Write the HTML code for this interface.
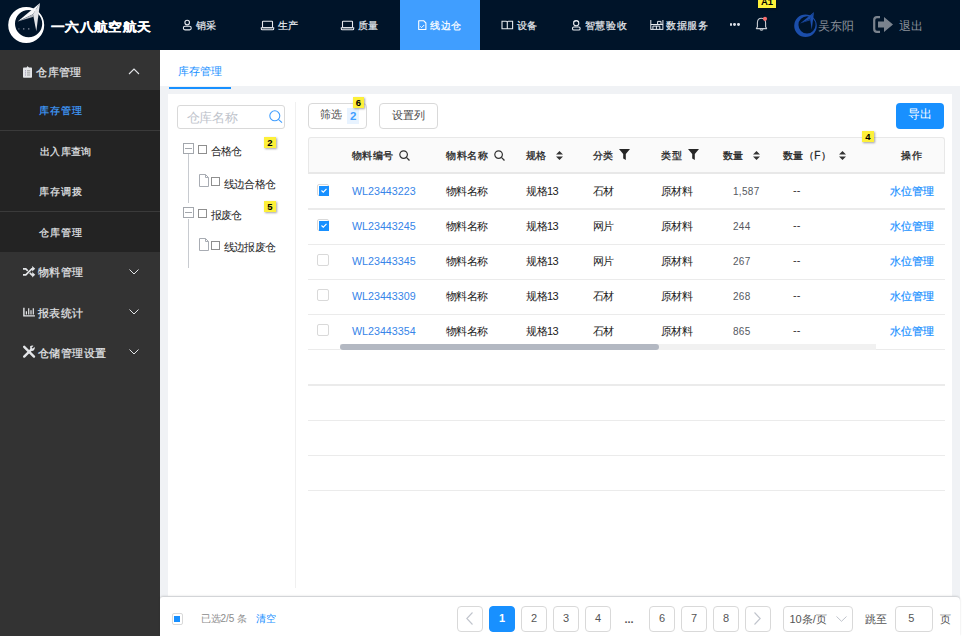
<!DOCTYPE html><html><head><meta charset="utf-8"><style>
*{margin:0;padding:0;box-sizing:border-box}
html,body{width:962px;height:636px;overflow:hidden;background:#fff;font-family:"Liberation Sans",sans-serif;font-size:12px;color:#303133}
.a{position:absolute;white-space:nowrap}
.r{position:absolute}
.yb{position:absolute;background:#fdf03a;color:#000;font-weight:bold;font-size:9.5px;line-height:12px;text-align:center;box-shadow:1px 1px 2px rgba(0,0,0,.35)}
.cb{position:absolute;width:12px;height:12px;border:1px solid #d9d9d9;border-radius:2px;background:#fff}
.pg{position:absolute;top:606px;width:26px;height:26px;border:1px solid #d9d9d9;border-radius:4px;text-align:center;line-height:23px;color:#555;font-size:11px;background:#fff}
svg{position:absolute;overflow:visible}
</style></head><body>
<div class="r" style="left:0;top:0;width:960px;height:50px;background:#001429"></div>
<svg style="left:0;top:0" width="50" height="50" viewBox="0 0 50 50">
<path fill-rule="evenodd" fill="#fff" d="M8.2 25 A18 18 0 1 0 44.2 25 A18 18 0 1 0 8.2 25 Z M15 23.7 A13.6 13.6 0 1 1 42.2 23.7 A13.6 13.6 0 1 1 15 23.7 Z"/>
<path d="M40 3 L17.7 21.6 L33 14.3 Z" fill="#f6f7f9"/>
<path d="M40 3 L33 14.3 L36.3 31.3 Z" fill="#e2e4e8"/>
<path d="M33 14.3 L17.7 21.6 L33.6 16.8 Z" fill="#aeb3bb"/>
<rect x="18.5" y="28.3" width="0.8" height="1.2" fill="#8a90a0"/><rect x="23" y="28.3" width="1.4" height="1.2" fill="#8a90a0"/><rect x="28" y="28.3" width="1.4" height="1.2" fill="#8a90a0"/>
</svg>
<div class="a" style="left:51px;top:16.5px;font-size:14px;line-height:20px;color:#fff;font-weight:bold;letter-spacing:0.35px;transform:scaleY(0.88);transform-origin:0 9.5px;-webkit-text-stroke:0.3px #fff">一六八航空航天</div>
<div class="r" style="left:400px;top:0;width:80px;height:50px;background:#409eff"></div>
<svg style="left:0;top:0" width="962" height="50"><circle cx="187.2" cy="22.6" r="2.3" fill="none" stroke="#e6e9ee" stroke-width="1.1"/><rect x="183.4" y="26.3" width="7.8" height="3.6" rx="1.6" fill="none" stroke="#e6e9ee" stroke-width="1.1"/></svg>
<div class="a" style="left:195.5px;top:16.0px;font-size:10px;line-height:20px;color:#e6e9ee;font-weight:normal;letter-spacing:0.7px;-webkit-text-stroke:0.2px #e6e9ee">销采</div>
<svg style="left:261px;top:0" width="14" height="50"><rect x="1.5" y="21.2" width="10" height="6.5" rx="0.6" fill="none" stroke="#e6e9ee" stroke-width="1.1"/><path d="M0.3 27.8 H12.7 V28.8 Q12.7 29.8 11.7 29.8 H1.3 Q0.3 29.8 0.3 28.8 Z" fill="none" stroke="#e6e9ee" stroke-width="1.1"/></svg>
<div class="a" style="left:277.5px;top:16.0px;font-size:10px;line-height:20px;color:#e6e9ee;font-weight:normal;letter-spacing:0.7px;-webkit-text-stroke:0.2px #e6e9ee">生产</div>
<svg style="left:341px;top:0" width="14" height="50"><rect x="1.5" y="21.2" width="10" height="6.5" rx="0.6" fill="none" stroke="#e6e9ee" stroke-width="1.1"/><path d="M0.3 27.8 H12.7 V28.8 Q12.7 29.8 11.7 29.8 H1.3 Q0.3 29.8 0.3 28.8 Z" fill="none" stroke="#e6e9ee" stroke-width="1.1"/></svg>
<div class="a" style="left:357.5px;top:16.0px;font-size:10px;line-height:20px;color:#e6e9ee;font-weight:normal;letter-spacing:0.7px;-webkit-text-stroke:0.2px #e6e9ee">质量</div>
<svg style="left:418px;top:0" width="10" height="50"><path d="M0.7 20.7 H5.6 L7.9 23 V29.5 H0.7 Z" fill="none" stroke="#fff" stroke-width="1.1" stroke-linejoin="round"/><path d="M2.3 26.4 L3.6 27.6 L6.2 25" fill="none" stroke="#fff" stroke-width="1"/></svg>
<div class="a" style="left:430px;top:16.0px;font-size:10px;line-height:20px;color:#fff;font-weight:normal;letter-spacing:0.7px;-webkit-text-stroke:0.2px #fff">线边仓</div>
<svg style="left:500.5px;top:0" width="14" height="50"><path d="M1 21.3 H5.3 Q6.3 21.3 6.3 22.3 V28.8 H1 Z M11.6 21.3 H7.3 Q6.3 21.3 6.3 22.3 V28.8 H11.6 Z" fill="none" stroke="#e6e9ee" stroke-width="1.1"/></svg>
<div class="a" style="left:516.5px;top:16.0px;font-size:10px;line-height:20px;color:#e6e9ee;font-weight:normal;letter-spacing:0.7px;-webkit-text-stroke:0.2px #e6e9ee">设备</div>
<svg style="left:572px;top:0" width="11" height="50"><circle cx="4.2" cy="23.2" r="2.6" fill="none" stroke="#e6e9ee" stroke-width="1.1"/><path d="M1.5 21.8 Q4.2 19.5 6.9 21.8" fill="none" stroke="#e6e9ee" stroke-width="1"/><rect x="0.5" y="27" width="7.6" height="3" rx="1.3" fill="none" stroke="#e6e9ee" stroke-width="1.1"/></svg>
<div class="a" style="left:584.5px;top:16.0px;font-size:10px;line-height:20px;color:#e6e9ee;font-weight:normal;letter-spacing:0.7px;-webkit-text-stroke:0.2px #e6e9ee">智慧验收</div>
<svg style="left:649.5px;top:0" width="14" height="50"><path d="M0.8 20 V29.8 M12.9 20 V29.8 M0.8 24.5 H12.9 M0.8 29.4 H12.9 M7.6 24.5 V21.4 H11 V24.5 M2.9 29.4 V26.1 H9.8 V29.4 M6.4 26.1 V29.4" fill="none" stroke="#e6e9ee" stroke-width="1"/></svg>
<div class="a" style="left:666px;top:16.0px;font-size:10px;line-height:20px;color:#e6e9ee;font-weight:normal;letter-spacing:0.7px;-webkit-text-stroke:0.2px #e6e9ee">数据服务</div>
<div class="r" style="left:729.6px;top:23.2px;width:2.8px;height:2.8px;border-radius:50%;background:#d8dde5"></div>
<div class="r" style="left:733.4px;top:23.2px;width:2.8px;height:2.8px;border-radius:50%;background:#d8dde5"></div>
<div class="r" style="left:737.2px;top:23.2px;width:2.8px;height:2.8px;border-radius:50%;background:#d8dde5"></div>
<svg style="left:0;top:0" width="962" height="50"><path d="M756.4 28.6 H766.6 L765.6 26.8 V23 Q765.6 18.3 761.5 18.3 Q757.4 18.3 757.4 23 V26.8 Z" fill="none" stroke="#c9cdd3" stroke-width="1.1" stroke-linejoin="round"/><path d="M759.9 29.3 Q761.5 31 763.1 29.3" fill="none" stroke="#c9cdd3" stroke-width="1.1"/><circle cx="765" cy="18.8" r="2.1" fill="#f56c6c"/></svg>
<div class="yb" style="left:758px;top:0px;width:18px;height:8px;line-height:8px;font-size:9.5px;overflow:hidden"><span style="position:relative;top:-2px">A1</span></div>
<svg style="left:0;top:0" width="962" height="50"><g transform="translate(789.05 10) scale(0.628)">
<path fill-rule="evenodd" fill="#1b4eab" d="M8.2 25 A18 18 0 1 0 44.2 25 A18 18 0 1 0 8.2 25 Z M15 23.7 A13.6 13.6 0 1 1 42.2 23.7 A13.6 13.6 0 1 1 15 23.7 Z"/>
<path d="M39.8 3.2 L17.7 21.6 L33.5 14.5 Z" fill="#1b4eab"/>
<path d="M39.8 3.2 L33.5 14.5 L36.1 31.1 Z" fill="#1b4eab"/>
<path d="M33.5 14.5 L17.7 21.6 L34 16.5 Z" fill="#15408f"/>
</g></svg>
<div class="a" style="left:818px;top:15.5px;font-size:11.5px;line-height:20px;color:#8c929b;font-weight:normal;">吴东阳</div>
<svg style="left:873px;top:16px" width="21" height="17" viewBox="0 0 21 17">
<path d="M7 1.2 H4 Q1.2 1.2 1.2 4 V13 Q1.2 15.8 4 15.8 H7" fill="none" stroke="#7a838e" stroke-width="2.2"/>
<path d="M5 5.5 H11 V1 L20 8.5 L11 16 V11.5 H5 Z" fill="#7a838e"/>
</svg>
<div class="a" style="left:899px;top:15.5px;font-size:11.5px;line-height:20px;color:#8c929b;font-weight:normal;">退出</div>
<div class="r" style="left:0;top:50px;width:160px;height:586px;background:#333"></div>
<div class="r" style="left:0;top:90px;width:160px;height:162px;background:#232323"></div>
<div class="r" style="left:0;top:130px;width:160px;height:1px;background:#3a3a3a"></div>
<div class="r" style="left:0;top:211px;width:160px;height:1px;background:#3a3a3a"></div>
<svg style="left:0;top:0" width="160" height="400"><rect x="23" y="67.6" width="9" height="10.2" rx="0.8" fill="#e4e6e9"/><path d="M26.3 68.2 L27.5 66 L29.3 68.2 Z" fill="#e4e6e9"/><path d="M25 70.8 h1 M25 72.9 h1 M25 75 h1" stroke="#9a8fb0" stroke-width="1"/><path d="M27 70.8 h3.2 M27 72.9 h3.2 M27 75 h3.2" stroke="#9a9a9a" stroke-width="1"/></svg>
<div class="a" style="left:36.3px;top:61.7px;font-size:11px;line-height:20px;color:#e4e6e9;font-weight:normal;letter-spacing:0.4px;-webkit-text-stroke:0.2px #e4e6e9">仓库管理</div>
<svg style="left:128px;top:68px" width="12" height="7" viewBox="0 0 12 7"><path d="M1 6 L6 1 L11 6" fill="none" stroke="#e4e6e9" stroke-width="1.1"/></svg>
<div class="a" style="left:39.2px;top:101.0px;font-size:10px;line-height:20px;color:#409eff;font-weight:normal;letter-spacing:0.8px;-webkit-text-stroke:0.2px #409eff">库存管理</div>
<div class="a" style="left:39.8px;top:142.0px;font-size:10px;line-height:20px;color:#e4e6e9;font-weight:normal;letter-spacing:0.4px;-webkit-text-stroke:0.2px #e4e6e9">出入库查询</div>
<div class="a" style="left:39.2px;top:182.2px;font-size:10px;line-height:20px;color:#e4e6e9;font-weight:normal;letter-spacing:0.8px;-webkit-text-stroke:0.2px #e4e6e9">库存调拨</div>
<div class="a" style="left:39.2px;top:223.0px;font-size:10px;line-height:20px;color:#e4e6e9;font-weight:normal;letter-spacing:0.8px;-webkit-text-stroke:0.2px #e4e6e9">仓库管理</div>
<svg style="left:0;top:0" width="160" height="400"><path d="M23 274.8 H25.8 L31.8 268.8 H33" fill="none" stroke="#e4e6e9" stroke-width="1.7"/><path d="M23 268.8 H25.8 L27.8 270.8 M29.8 272.8 L31.8 274.8 H33" fill="none" stroke="#e4e6e9" stroke-width="1.7"/><path d="M32.2 266 L35.2 268.8 L32.2 271.6 Z M32.2 272 L35.2 274.8 L32.2 277.6 Z" fill="#e4e6e9"/></svg>
<div class="a" style="left:37.6px;top:262.4px;font-size:11px;line-height:20px;color:#e4e6e9;font-weight:normal;letter-spacing:0.5px;-webkit-text-stroke:0.2px #e4e6e9">物料管理</div>
<svg style="left:0;top:0" width="160" height="400"><path d="M23.9 307.8 V315.9 H34.9" fill="none" stroke="#e4e6e9" stroke-width="1.4"/><path d="M26.4 311.3 V314.4 M28.7 308.3 V314.4 M31 310.3 V314.4 M33.3 308.3 V314.4" stroke="#e4e6e9" stroke-width="1.2"/></svg>
<div class="a" style="left:37.6px;top:302.7px;font-size:11px;line-height:20px;color:#e4e6e9;font-weight:normal;letter-spacing:0.5px;-webkit-text-stroke:0.2px #e4e6e9">报表统计</div>
<svg style="left:0;top:0" width="160" height="400"><path d="M24.2 346.8 L34 356.6" stroke="#e4e6e9" stroke-width="2.4" stroke-linecap="round"/><path d="M24.2 356.6 L31.5 349.3" stroke="#e4e6e9" stroke-width="2.4" stroke-linecap="round"/><path d="M30 346.5 Q31.5 345.2 33.5 345.8 L31.6 347.8 L32.6 348.8 L34.6 346.8 Q35.2 348.8 33.9 350.2 Q32.4 351.5 30.6 350.6 Z" fill="#e4e6e9"/></svg>
<div class="a" style="left:37.6px;top:342.5px;font-size:11px;line-height:20px;color:#e4e6e9;font-weight:normal;letter-spacing:0.5px;-webkit-text-stroke:0.2px #e4e6e9">仓储管理设置</div>
<svg style="left:129px;top:268.5px" width="10" height="6" viewBox="0 0 10 6"><path d="M0.5 0.5 L5 5 L9.5 0.5" fill="none" stroke="#e4e6e9" stroke-width="1"/></svg>
<svg style="left:129px;top:308.7px" width="10" height="6" viewBox="0 0 10 6"><path d="M0.5 0.5 L5 5 L9.5 0.5" fill="none" stroke="#e4e6e9" stroke-width="1"/></svg>
<svg style="left:129px;top:348.7px" width="10" height="6" viewBox="0 0 10 6"><path d="M0.5 0.5 L5 5 L9.5 0.5" fill="none" stroke="#e4e6e9" stroke-width="1"/></svg>
<div class="r" style="left:160px;top:50px;width:800px;height:586px;background:#f0f2f5"></div>
<div class="r" style="left:160px;top:50px;width:800px;height:36px;background:#fff"></div>
<div class="r" style="left:169px;top:87px;width:62px;height:2px;background:#1890ff"></div>
<div class="a" style="left:177.5px;top:60.7px;font-size:11px;line-height:20px;color:#1890ff;font-weight:normal;letter-spacing:0.3px">库存管理</div>
<div class="r" style="left:168px;top:94px;width:784px;height:502px;background:#fff"></div>
<div class="r" style="left:295px;top:102px;width:1px;height:486px;background:#f0f0f0"></div>
<div class="r" style="left:177px;top:105px;width:108px;height:24px;border:1px solid #d9d9d9;border-radius:3px"></div>
<div class="a" style="left:186.7px;top:107.5px;font-size:13px;line-height:20px;color:#c0c4cc;font-weight:normal;letter-spacing:-0.3px">仓库名称</div>
<svg style="left:269px;top:110px" width="14" height="13" viewBox="0 0 14 13"><circle cx="5.8" cy="5.8" r="5" fill="none" stroke="#409eff" stroke-width="1.1"/><path d="M9.4 9.4 L13 12.6" stroke="#409eff" stroke-width="1.1"/></svg>
<div class="r" style="left:183px;top:142.5px;width:11px;height:11px;border:1px solid #a3a7ad"></div><div class="r" style="left:185px;top:147.5px;width:7px;height:1px;background:#a3a7ad"></div>
<div class="r" style="left:198px;top:145px;width:9px;height:9px;border:1px solid #8f8f8f"></div>
<div class="a" style="left:211.2px;top:141.0px;font-size:11px;line-height:20px;color:#1f1f1f;font-weight:normal;letter-spacing:-1px">合格仓</div>
<div class="yb" style="left:264px;top:137px;width:12px;height:11px">2</div>
<div class="r" style="left:188px;top:154px;width:1px;height:49px;background:#c8cbd0"></div>
<svg style="left:198.5px;top:173.5px" width="10" height="13" viewBox="0 0 10 13"><path d="M0.5 0.5 H6.5 L9.5 3.5 V12.5 H0.5 Z M6.5 0.5 V3.5 H9.5" fill="none" stroke="#a8acb3" stroke-width="1"/></svg>
<div class="r" style="left:211px;top:177px;width:9px;height:9px;border:1px solid #8f8f8f"></div>
<div class="a" style="left:223.6px;top:173.5px;font-size:11px;line-height:20px;color:#1f1f1f;font-weight:normal;letter-spacing:-0.6px">线边合格仓</div>
<div class="r" style="left:183px;top:207px;width:11px;height:11px;border:1px solid #a3a7ad"></div><div class="r" style="left:185px;top:212px;width:7px;height:1px;background:#a3a7ad"></div>
<div class="r" style="left:198px;top:209px;width:9px;height:9px;border:1px solid #8f8f8f"></div>
<div class="a" style="left:211.2px;top:205.2px;font-size:11px;line-height:20px;color:#1f1f1f;font-weight:normal;letter-spacing:-1px">报废仓</div>
<div class="yb" style="left:264px;top:201px;width:12px;height:11px">5</div>
<div class="r" style="left:188px;top:219px;width:1px;height:49px;background:#c8cbd0"></div>
<svg style="left:198.5px;top:237.5px" width="10" height="13" viewBox="0 0 10 13"><path d="M0.5 0.5 H6.5 L9.5 3.5 V12.5 H0.5 Z M6.5 0.5 V3.5 H9.5" fill="none" stroke="#a8acb3" stroke-width="1"/></svg>
<div class="r" style="left:211px;top:241px;width:9px;height:9px;border:1px solid #8f8f8f"></div>
<div class="a" style="left:223.6px;top:236.8px;font-size:11px;line-height:20px;color:#1f1f1f;font-weight:normal;letter-spacing:-0.6px">线边报废仓</div>
<div class="r" style="left:308px;top:103px;width:59px;height:26px;border:1px solid #d9d9d9;border-radius:4px"></div>
<div class="a" style="left:320px;top:104.3px;font-size:11px;line-height:20px;color:#4a4a4a;font-weight:normal;">筛选</div>
<div class="r" style="left:347px;top:108px;width:12px;height:16px;background:#e8f3ff"></div>
<div class="a" style="left:350px;top:106.3px;font-size:11.5px;line-height:20px;color:#409eff;font-weight:bold;">2</div>
<div class="yb" style="left:353px;top:97px;width:11px;height:11px">6</div>
<div class="r" style="left:379px;top:103px;width:59px;height:26px;border:1px solid #d9d9d9;border-radius:4px"></div>
<div class="a" style="left:391.5px;top:104.5px;font-size:11px;line-height:20px;color:#4a4a4a;font-weight:normal;">设置列</div>
<div class="r" style="left:896px;top:103px;width:48px;height:26px;background:#1890ff;border-radius:4px"></div>
<div class="a" style="left:908.3px;top:104.0px;font-size:12px;line-height:20px;color:#fff;font-weight:normal;">导出</div>
<div class="r" style="left:308px;top:137px;width:637px;height:37px;background:#fafafa;border:1px solid #e8e8e8;border-bottom:none;border-radius:3px 3px 0 0"></div>
<div class="r" style="left:308px;top:172px;width:637px;height:2px;background:#e8e8e8"></div>
<div class="a" style="left:351.5px;top:145.8px;font-size:10px;line-height:20px;color:#262626;font-weight:normal;letter-spacing:0.6px;-webkit-text-stroke:0.3px #262626">物料编号</div>
<svg style="left:399px;top:150px" width="11" height="11" viewBox="0 0 11 11"><circle cx="4.6" cy="4.6" r="3.8" fill="none" stroke="#333" stroke-width="1.2"/><path d="M7.4 7.4 L10.5 10.5" stroke="#333" stroke-width="1.3"/></svg>
<div class="a" style="left:446px;top:145.8px;font-size:10px;line-height:20px;color:#262626;font-weight:normal;letter-spacing:0.6px;-webkit-text-stroke:0.3px #262626">物料名称</div>
<svg style="left:493.5px;top:150px" width="11" height="11" viewBox="0 0 11 11"><circle cx="4.6" cy="4.6" r="3.8" fill="none" stroke="#333" stroke-width="1.2"/><path d="M7.4 7.4 L10.5 10.5" stroke="#333" stroke-width="1.3"/></svg>
<div class="a" style="left:525.5px;top:145.8px;font-size:10px;line-height:20px;color:#262626;font-weight:normal;letter-spacing:0.6px;-webkit-text-stroke:0.3px #262626">规格</div>
<svg style="left:555.5px;top:150.5px" width="7" height="9" viewBox="0 0 7 9"><path d="M3.5 0 L7 3.5 H0 Z M0 5.5 H7 L3.5 9 Z" fill="#333"/></svg>
<div class="a" style="left:592.5px;top:145.8px;font-size:10px;line-height:20px;color:#262626;font-weight:normal;letter-spacing:0.6px;-webkit-text-stroke:0.3px #262626">分类</div>
<svg style="left:619px;top:149px" width="11" height="11" viewBox="0 0 11 11"><path d="M0 0 H11 L6.8 5 V11 L4.2 9.5 V5 Z" fill="#262626"/></svg>
<div class="a" style="left:661px;top:145.8px;font-size:10px;line-height:20px;color:#262626;font-weight:normal;letter-spacing:0.6px;-webkit-text-stroke:0.3px #262626">类型</div>
<svg style="left:688px;top:149px" width="11" height="11" viewBox="0 0 11 11"><path d="M0 0 H11 L6.8 5 V11 L4.2 9.5 V5 Z" fill="#262626"/></svg>
<div class="a" style="left:722.5px;top:145.8px;font-size:10px;line-height:20px;color:#262626;font-weight:normal;letter-spacing:0.6px;-webkit-text-stroke:0.3px #262626">数量</div>
<svg style="left:752.5px;top:150.5px" width="7" height="9" viewBox="0 0 7 9"><path d="M3.5 0 L7 3.5 H0 Z M0 5.5 H7 L3.5 9 Z" fill="#333"/></svg>
<div class="a" style="left:782.5px;top:145.8px;font-size:10px;line-height:20px;color:#262626;font-weight:normal;letter-spacing:0.6px;-webkit-text-stroke:0.3px #262626">数量（F）</div>
<svg style="left:838.5px;top:150.5px" width="7" height="9" viewBox="0 0 7 9"><path d="M3.5 0 L7 3.5 H0 Z M0 5.5 H7 L3.5 9 Z" fill="#333"/></svg>
<div class="a" style="left:901px;top:145.8px;font-size:10px;line-height:20px;color:#262626;font-weight:normal;letter-spacing:0.6px;-webkit-text-stroke:0.3px #262626">操作</div>
<div class="yb" style="left:862px;top:131px;width:12px;height:11px">4</div>
<div class="cb" style="left:317px;top:184px;width:12px;height:12px"></div>
<div class="r" style="left:318.8px;top:186px;width:10.4px;height:10px;background:#1890ff"></div>
<svg style="left:321px;top:188.2px" width="6" height="5" viewBox="0 0 6 5"><path d="M0.5 2.5 L2.3 4.2 L5.5 0.8" fill="none" stroke="#fff" stroke-width="1.1"/></svg>
<div class="a" style="left:352px;top:180.7px;font-size:10.7px;line-height:20px;color:#3584e8;font-weight:normal;">WL23443223</div>
<div class="a" style="left:446px;top:181.2px;font-size:11px;line-height:20px;color:#1a1a1a;font-weight:normal;letter-spacing:-0.7px">物料名称</div>
<div class="a" style="left:526px;top:181.2px;font-size:11px;line-height:20px;color:#1a1a1a;font-weight:normal;letter-spacing:-0.5px">规格13</div>
<div class="a" style="left:592.5px;top:181.2px;font-size:11px;line-height:20px;color:#1a1a1a;font-weight:normal;letter-spacing:-0.6px">石材</div>
<div class="a" style="left:661px;top:181.2px;font-size:11px;line-height:20px;color:#1a1a1a;font-weight:normal;letter-spacing:-0.6px">原材料</div>
<div class="a" style="left:733px;top:182.0px;font-size:10px;line-height:20px;color:#55595f;font-weight:normal;letter-spacing:0.3px">1,587</div>
<div class="a" style="left:793px;top:180.2px;font-size:11px;line-height:20px;color:#333;font-weight:normal;">--</div>
<div class="a" style="left:890.3px;top:181.3px;font-size:11px;line-height:20px;color:#1890ff;font-weight:normal;;-webkit-text-stroke:0.2px #1890ff">水位管理</div>
<div class="r" style="left:308px;top:208px;width:637px;height:2px;background:#ebebeb"></div>
<div class="cb" style="left:317px;top:219px;width:12px;height:12px"></div>
<div class="r" style="left:318.8px;top:221px;width:10.4px;height:10px;background:#1890ff"></div>
<svg style="left:321px;top:223.2px" width="6" height="5" viewBox="0 0 6 5"><path d="M0.5 2.5 L2.3 4.2 L5.5 0.8" fill="none" stroke="#fff" stroke-width="1.1"/></svg>
<div class="a" style="left:352px;top:215.7px;font-size:10.7px;line-height:20px;color:#3584e8;font-weight:normal;">WL23443245</div>
<div class="a" style="left:446px;top:216.2px;font-size:11px;line-height:20px;color:#1a1a1a;font-weight:normal;letter-spacing:-0.7px">物料名称</div>
<div class="a" style="left:526px;top:216.2px;font-size:11px;line-height:20px;color:#1a1a1a;font-weight:normal;letter-spacing:-0.5px">规格13</div>
<div class="a" style="left:592.5px;top:216.2px;font-size:11px;line-height:20px;color:#1a1a1a;font-weight:normal;letter-spacing:-0.6px">网片</div>
<div class="a" style="left:661px;top:216.2px;font-size:11px;line-height:20px;color:#1a1a1a;font-weight:normal;letter-spacing:-0.6px">原材料</div>
<div class="a" style="left:733px;top:217.0px;font-size:10px;line-height:20px;color:#55595f;font-weight:normal;letter-spacing:0.3px">244</div>
<div class="a" style="left:793px;top:215.2px;font-size:11px;line-height:20px;color:#333;font-weight:normal;">--</div>
<div class="a" style="left:890.3px;top:216.3px;font-size:11px;line-height:20px;color:#1890ff;font-weight:normal;;-webkit-text-stroke:0.2px #1890ff">水位管理</div>
<div class="r" style="left:308px;top:244px;width:637px;height:1px;background:#ebebeb"></div>
<div class="cb" style="left:317px;top:254px"></div>
<div class="a" style="left:352px;top:250.7px;font-size:10.7px;line-height:20px;color:#3584e8;font-weight:normal;">WL23443345</div>
<div class="a" style="left:446px;top:251.2px;font-size:11px;line-height:20px;color:#1a1a1a;font-weight:normal;letter-spacing:-0.7px">物料名称</div>
<div class="a" style="left:526px;top:251.2px;font-size:11px;line-height:20px;color:#1a1a1a;font-weight:normal;letter-spacing:-0.5px">规格13</div>
<div class="a" style="left:592.5px;top:251.2px;font-size:11px;line-height:20px;color:#1a1a1a;font-weight:normal;letter-spacing:-0.6px">网片</div>
<div class="a" style="left:661px;top:251.2px;font-size:11px;line-height:20px;color:#1a1a1a;font-weight:normal;letter-spacing:-0.6px">原材料</div>
<div class="a" style="left:733px;top:252.0px;font-size:10px;line-height:20px;color:#55595f;font-weight:normal;letter-spacing:0.3px">267</div>
<div class="a" style="left:793px;top:250.2px;font-size:11px;line-height:20px;color:#333;font-weight:normal;">--</div>
<div class="a" style="left:890.3px;top:251.3px;font-size:11px;line-height:20px;color:#1890ff;font-weight:normal;;-webkit-text-stroke:0.2px #1890ff">水位管理</div>
<div class="r" style="left:308px;top:279px;width:637px;height:1px;background:#ebebeb"></div>
<div class="cb" style="left:317px;top:289px"></div>
<div class="a" style="left:352px;top:285.7px;font-size:10.7px;line-height:20px;color:#3584e8;font-weight:normal;">WL23443309</div>
<div class="a" style="left:446px;top:286.2px;font-size:11px;line-height:20px;color:#1a1a1a;font-weight:normal;letter-spacing:-0.7px">物料名称</div>
<div class="a" style="left:526px;top:286.2px;font-size:11px;line-height:20px;color:#1a1a1a;font-weight:normal;letter-spacing:-0.5px">规格13</div>
<div class="a" style="left:592.5px;top:286.2px;font-size:11px;line-height:20px;color:#1a1a1a;font-weight:normal;letter-spacing:-0.6px">石材</div>
<div class="a" style="left:661px;top:286.2px;font-size:11px;line-height:20px;color:#1a1a1a;font-weight:normal;letter-spacing:-0.6px">原材料</div>
<div class="a" style="left:733px;top:287.0px;font-size:10px;line-height:20px;color:#55595f;font-weight:normal;letter-spacing:0.3px">268</div>
<div class="a" style="left:793px;top:285.2px;font-size:11px;line-height:20px;color:#333;font-weight:normal;">--</div>
<div class="a" style="left:890.3px;top:286.3px;font-size:11px;line-height:20px;color:#1890ff;font-weight:normal;;-webkit-text-stroke:0.2px #1890ff">水位管理</div>
<div class="r" style="left:308px;top:314px;width:637px;height:1px;background:#ebebeb"></div>
<div class="cb" style="left:317px;top:324px"></div>
<div class="a" style="left:352px;top:320.7px;font-size:10.7px;line-height:20px;color:#3584e8;font-weight:normal;">WL23443354</div>
<div class="a" style="left:446px;top:321.2px;font-size:11px;line-height:20px;color:#1a1a1a;font-weight:normal;letter-spacing:-0.7px">物料名称</div>
<div class="a" style="left:526px;top:321.2px;font-size:11px;line-height:20px;color:#1a1a1a;font-weight:normal;letter-spacing:-0.5px">规格13</div>
<div class="a" style="left:592.5px;top:321.2px;font-size:11px;line-height:20px;color:#1a1a1a;font-weight:normal;letter-spacing:-0.6px">石材</div>
<div class="a" style="left:661px;top:321.2px;font-size:11px;line-height:20px;color:#1a1a1a;font-weight:normal;letter-spacing:-0.6px">原材料</div>
<div class="a" style="left:733px;top:322.0px;font-size:10px;line-height:20px;color:#55595f;font-weight:normal;letter-spacing:0.3px">865</div>
<div class="a" style="left:793px;top:320.2px;font-size:11px;line-height:20px;color:#333;font-weight:normal;">--</div>
<div class="a" style="left:890.3px;top:321.3px;font-size:11px;line-height:20px;color:#1890ff;font-weight:normal;;-webkit-text-stroke:0.2px #1890ff">水位管理</div>
<div class="r" style="left:308px;top:349px;width:637px;height:1px;background:#ebebeb"></div>
<div class="r" style="left:340px;top:344px;width:536px;height:6px;background:#f1f1f1"></div>
<div class="r" style="left:340px;top:344px;width:319px;height:6px;border-radius:3px;background:#b3b8c2"></div>
<div class="r" style="left:308px;top:384px;width:637px;height:2px;background:#ebebeb"></div>
<div class="r" style="left:308px;top:420px;width:637px;height:1px;background:#ebebeb"></div>
<div class="r" style="left:308px;top:455px;width:637px;height:1px;background:#ebebeb"></div>
<div class="r" style="left:308px;top:490px;width:637px;height:1px;background:#ebebeb"></div>
<div class="r" style="left:160px;top:597px;width:800px;height:39px;background:#fff;border-radius:3px 4px 0 0;box-shadow:0 -1px 2px rgba(0,0,0,.16)"></div>
<div class="r" style="left:172px;top:613px;width:11px;height:12px;border:1px solid #d9d9d9;border-radius:2px;background:#fff"></div>
<div class="r" style="left:174px;top:616px;width:6px;height:6px;background:#1890ff"></div>
<div class="a" style="left:200.5px;top:608.8px;font-size:10px;line-height:20px;color:#8c8c8c;font-weight:normal;">已选2/5 条</div>
<div class="a" style="left:255.5px;top:608.8px;font-size:10px;line-height:20px;color:#1890ff;font-weight:normal;letter-spacing:0.5px">清空</div>
<div class="pg" style="left:457px"></div>
<svg style="left:466px;top:612px" width="7" height="13" viewBox="0 0 7 13"><path d="M6.5 0.5 L0.8 6.5 L6.5 12.5" fill="none" stroke="#c0c4cc" stroke-width="1.1"/></svg>
<div class="pg" style="left:489px;background:#1890ff;border-color:#1890ff;color:#fff;font-weight:bold">1</div>
<div class="pg" style="left:521px">2</div>
<div class="pg" style="left:553px">3</div>
<div class="pg" style="left:585px">4</div>
<div class="pg" style="left:649px">6</div>
<div class="pg" style="left:681px">7</div>
<div class="pg" style="left:713px">8</div>
<div class="a" style="left:624.5px;top:608.5px;font-size:11px;line-height:20px;color:#555;font-weight:bold;">...</div>
<div class="pg" style="left:745px"></div>
<svg style="left:754px;top:612px" width="7" height="13" viewBox="0 0 7 13"><path d="M0.5 0.5 L6.2 6.5 L0.5 12.5" fill="none" stroke="#c0c4cc" stroke-width="1.1"/></svg>
<div class="r" style="left:783px;top:606px;width:70px;height:26px;border:1px solid #d9d9d9;border-radius:4px"></div>
<div class="a" style="left:789.5px;top:608.7px;font-size:11px;line-height:20px;color:#555;font-weight:normal;">10条/页</div>
<svg style="left:835.5px;top:616px" width="11" height="6" viewBox="0 0 11 6"><path d="M0.5 0.5 L5.5 5.3 L10.5 0.5" fill="none" stroke="#c0c4cc" stroke-width="1"/></svg>
<div class="a" style="left:865px;top:608.7px;font-size:11px;line-height:20px;color:#555;font-weight:normal;">跳至</div>
<div class="r" style="left:895px;top:606px;width:38px;height:26px;border:1px solid #d9d9d9;border-radius:4px"></div>
<div class="a" style="left:908.2px;top:608.3px;font-size:11px;line-height:20px;color:#555;font-weight:normal;">5</div>
<div class="a" style="left:940px;top:608.7px;font-size:11px;line-height:20px;color:#555;font-weight:normal;">页</div>
</body></html>
